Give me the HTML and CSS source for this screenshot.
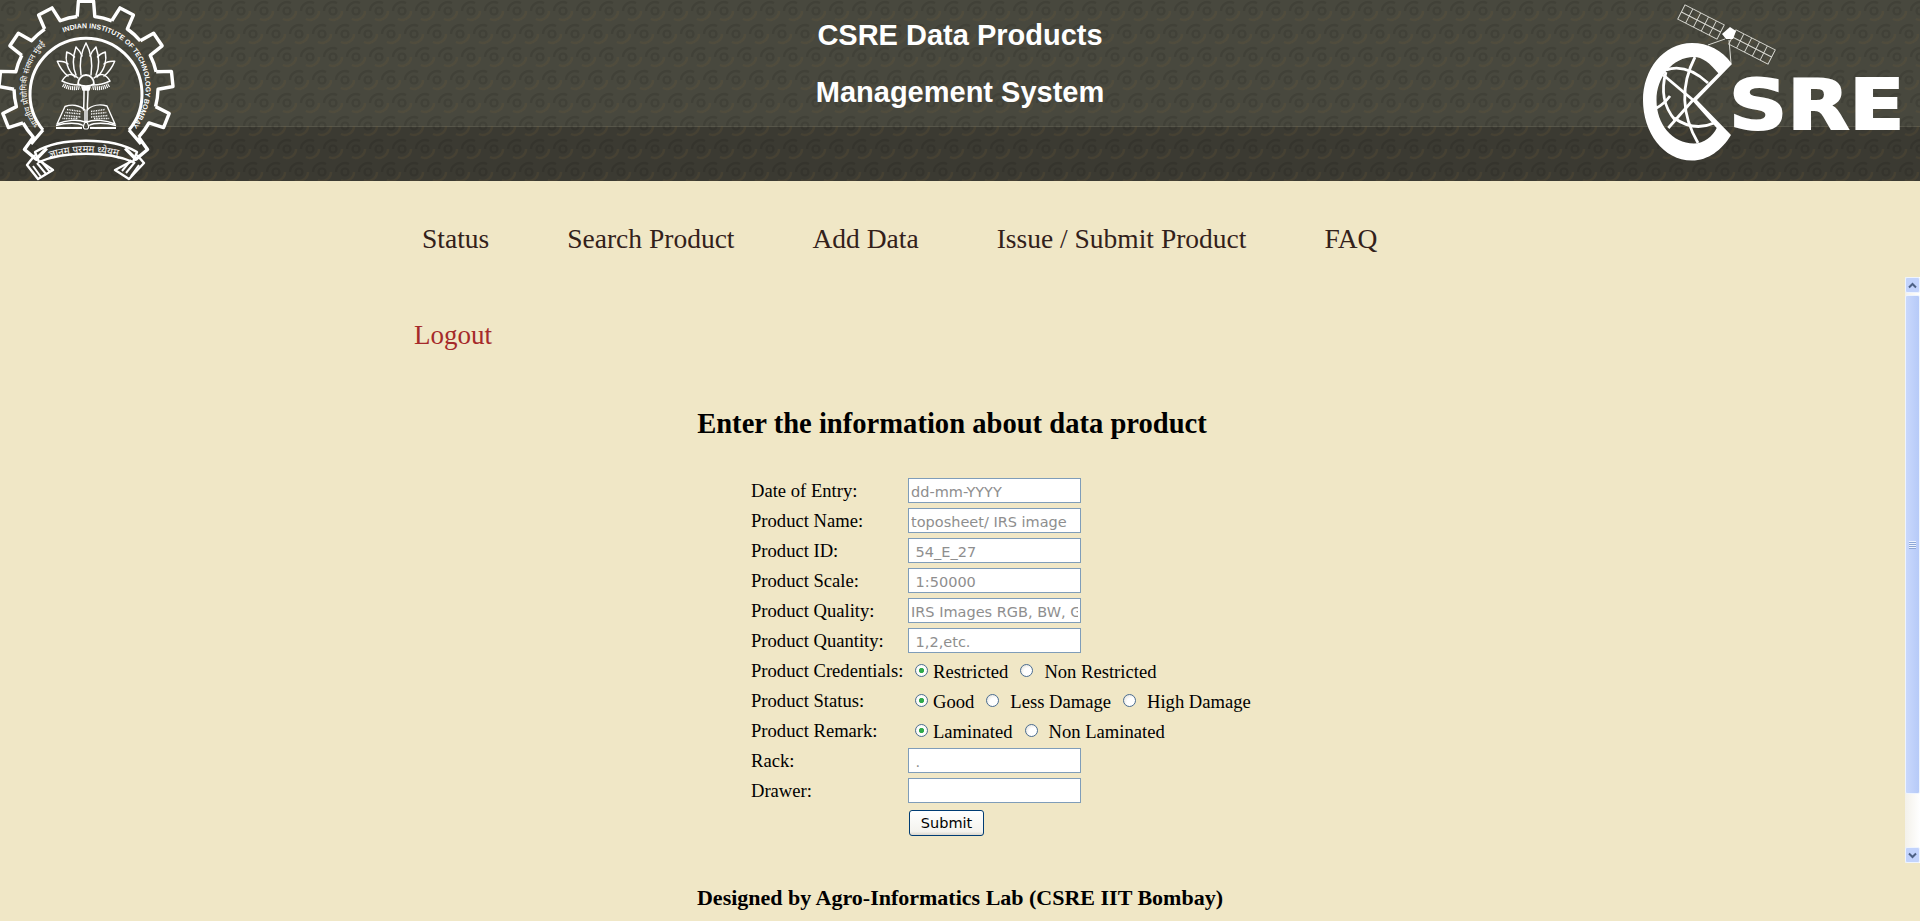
FILE: index.html
```html
<!DOCTYPE html>
<html lang="en">
<head>
<meta charset="utf-8">
<title>CSRE Data Products Management System</title>
<link rel="stylesheet" href="styles.css">
</head>
<body>
<header class="masthead">
  <svg class="masthead-bg" width="100%" height="100%" aria-hidden="true">
    <defs>
      <g id="swirl" fill="none">
        <circle cx="0" cy="0" r="3.5" stroke="#000" stroke-opacity=".1" stroke-width="2.2"/>
        <path d="M-9 0a9 9 0 0 1 13-8" stroke="#000" stroke-opacity=".1" stroke-width="2.4"/>
        <path d="M9 0a9 9 0 0 1-13 8" stroke="#7a6436" stroke-opacity=".16" stroke-width="2.4"/>
      </g>
      <pattern id="spiral" width="46" height="46" patternUnits="userSpaceOnUse">
        <use href="#swirl" x="11" y="11"/>
        <use href="#swirl" x="34" y="11"/>
        <use href="#swirl" x="0" y="34"/>
        <use href="#swirl" x="23" y="34"/>
        <use href="#swirl" x="46" y="34"/>
        <use href="#swirl" x="11" y="57"/>
        <use href="#swirl" x="34" y="57"/>
        <use href="#swirl" x="0" y="-12"/>
        <use href="#swirl" x="23" y="-12"/>
        <use href="#swirl" x="46" y="-12"/>
      </pattern>
    </defs>
    <rect width="100%" height="100%" fill="url(#spiral)"/>
  </svg>

  <svg class="logo-iit" width="175" height="181" viewBox="0 0 175 181" role="img" aria-label="IIT Bombay">
    <defs>
      <path id="tooth" d="M-8.8 -71.5L-7.6 -86.7L7.6 -86.7L8.8 -71.5A72 72 0 0 1 25.8 -67.2"/>
      <path id="arcEn" d="M63.5 32.4A60 60 0 0 1 133 125"/>
      <path id="arcHi" d="M39 125A60 60 0 0 1 59 35"/>
      <path id="ribbonArc" d="M50 158Q86 147 124 158"/>
    </defs>
    <g transform="translate(86 88)" fill="none" stroke="#fff" stroke-width="3.4" stroke-linejoin="round">
      <use href="#tooth" transform="rotate(-140)"/>
      <use href="#tooth" transform="rotate(-112)"/>
      <use href="#tooth" transform="rotate(-84)"/>
      <use href="#tooth" transform="rotate(-56)"/>
      <use href="#tooth" transform="rotate(-28)"/>
      <use href="#tooth"/>
      <use href="#tooth" transform="rotate(28)"/>
      <use href="#tooth" transform="rotate(56)"/>
      <use href="#tooth" transform="rotate(84)"/>
      <use href="#tooth" transform="rotate(112)"/>
      <path d="M-8.8 -71.5L-7.6 -86.7L7.6 -86.7L8.8 -71.5" transform="rotate(140)"/>
      <path d="M-43 42A56 56 0 1 1 43 42" stroke-width="3"/>
      <path d="M-55 56L-43 42M55 56L43 42"/>
    </g>
    <text class="seal-text"><textPath href="#arcEn">INDIAN INSTITUTE OF TECHNOLOGY BOMBAY</textPath></text>
    <text class="seal-text seal-hi"><textPath href="#arcHi">भारतीय प्रौद्योगिकी संस्थान मुंबई</textPath></text>

    <g fill="none" stroke="#fff" stroke-width="1.5" stroke-linejoin="round" stroke-linecap="round">
      <path d="M86 43C81 52 79 62 81 75M86 43C91 52 93 62 91 75"/>
      <path d="M76 47C73 56 72 66 76 75M76 47C79 50 81 53 82 56M96 47C99 56 100 66 96 75M96 47C93 50 91 53 90 56"/>
      <path d="M66.7 52C65 60 67 70 75 77M66.7 52C70 53 73 55 74.5 57M105.3 52C107 60 105 70 97 77M105.3 52C102 53 99 55 97.500 57"/>
      <path d="M57.300 61.300C60 68 64 73 68 76M57.300 61.300C62 61 66 62 68 64M114.700 61.300C112 68 108 73 104 76M114.700 61.300C110 61 106 62 104 64"/>
      <path d="M78 78C72 72 66 74 62 81C68 84 74 85 79 85M94 78C100 72 106 74 110 81C104 84 98 85 93 85"/>
      <path d="M78 84A8 9 0 0 1 94 84C90 87 82 87 78 84Z" stroke-width="1.8"/>
      <path d="M82 87H90L89 90H83Z" fill="#fff"/>
      <path d="M84 90C84 100 84 105 83.500 110M88 90C88 100 87 105 87.500 110"/>
    </g>
    <path d="M63 85C68 88 74 89 80 87.500M109 85C104 88 98 89 92 87.500" fill="none" stroke="#fff" stroke-width="4" stroke-dasharray="1.100 .8"/>
    <g fill="none" stroke="#fff" stroke-width="1.4" stroke-linejoin="round">
      <path d="M65 106.500C72 104 80 105 85 110V122C78 119 66 120 57 124Z"/>
      <path d="M107 106C100 104 92 105 87 110V122C94 119 106 120 115 124Z"/>
      <path d="M67 109.500L81 111.500M65.500 112.500L81 114M64 115.500L81 117M62.500 118.500L78 118.500M91 111.500L105 109.500M91 114L106.500 112.500M91 117L108 115.500M94 118.500L109.500 118.500" stroke-width="1.500" stroke-dasharray="1 .7"/>
      <path d="M56 125.500C66 122.500 78 122.500 83 125.500M116 125.500C106 122.500 94 122.500 89 125.500"/>
      <path d="M56 128H82M116 128H90" stroke-width="1.800"/>
      <path d="M86 121C83 125 82 129 86 129C90 129 89 125 86 121Z" stroke-width="1.200"/>
    </g>

    <g fill="none" stroke="#fff" stroke-width="2.4" stroke-linejoin="round">
      <path d="M35 152C60 137 112 137 137 152L133 162C108 151 64 151 39 162Z"/>
      <path d="M35 155L27 165L38 179L53 170L40 161M137 155L144 163L129 179L115 170L132 161"/>
    </g>
    <path d="M33 166L41 177M37 163L46 174M41 161L50 172M139 165L131 176M135 162L126 173M131 160L122 171" fill="none" stroke="#fff" stroke-width="2"/>
    <text class="seal-ribbon"><textPath href="#ribbonArc">ज्ञानम् परमम् ध्येयम्</textPath></text>
  </svg>

  <div class="masthead-title">
    <h1>CSRE Data Products</h1>
    <h1>Management System</h1>
  </div>

  <svg class="logo-csre" width="300" height="181" viewBox="0 0 300 181" role="img" aria-label="CSRE">
    <defs>
      <g id="panel" fill="none" stroke="#d9d9d2" stroke-width="1">
        <path d="M-22 -8h44v16h-44zM-22 0h44M-13.2 -8v16M-4.4 -8v16M4.4 -8v16M13.2 -8v16"/>
      </g>
    </defs>
    <use href="#panel" transform="translate(81 22) rotate(27)"/>
    <use href="#panel" transform="translate(132 47) rotate(27)"/>
    <path d="M102 34L110 27L116 31L113 39L106 39Z" fill="#fff"/>
    <path d="M105 39L88 45M109 40L111 63" stroke="#d9d9d2" fill="none"/>
    <path fill="#fff" fill-rule="evenodd" d="M112 64C102 50 88 43 72 43C43 43 23 70 23 100C23 132 43 160.500 72 160.500C88 160.500 102 150 111 135L77 100ZM98.300 73.300C90 63 82 57 74 57C52 57 36.500 78 36.500 100C36.500 124 52 143.500 74 143.500C84 143.500 93 136 96.700 128L71.700 100Z"/>
    <g fill="none" stroke="#fff" stroke-width="2.800">
      <path d="M73 100L43.300 75"/>
      <path d="M73 100L48.300 128"/>
      <path d="M46 70Q66 63 88 83"/>
      <path d="M54 118Q74 132 94 123"/>
      <path d="M75 57Q53 100 78 143"/>
      <path d="M36.500 108Q44 104 50 96"/>
      <path d="M46 72Q38 100 55 120"/>
    </g>
    <text class="csre-mark" transform="translate(109 129) scale(1.17 1)">SRE</text>
  </svg>
</header>

<main class="content">
  <nav class="main-nav">
    <a href="#">Status</a>
    <a href="#">Search Product</a>
    <a href="#">Add Data</a>
    <a href="#">Issue / Submit Product</a>
    <a href="#">FAQ</a>
  </nav>
  <a class="logout" href="#">Logout</a>

  <h2 class="form-title">Enter the information about data product</h2>

  <form class="entry-form">
    <label class="lbl">Date of Entry:</label>
    <input class="field" type="text" placeholder="dd-mm-YYYY">
    <label class="lbl">Product Name:</label>
    <input class="field" type="text" placeholder="toposheet/ IRS image">
    <label class="lbl">Product ID:</label>
    <input class="field" type="text" placeholder=" 54_E_27">
    <label class="lbl">Product Scale:</label>
    <input class="field" type="text" placeholder=" 1:50000">
    <label class="lbl">Product Quality:</label>
    <input class="field" type="text" placeholder="IRS Images RGB, BW, GIS">
    <label class="lbl">Product Quantity:</label>
    <input class="field" type="text" placeholder=" 1,2,etc.">

    <label class="lbl">Product Credentials:</label>
    <div class="radios">
      <input class="radio" type="radio" name="cred" checked><span class="opt">Restricted</span>
      <input class="radio" type="radio" name="cred"><span class="opt">Non Restricted</span>
    </div>
    <label class="lbl">Product Status:</label>
    <div class="radios">
      <input class="radio" type="radio" name="status" checked><span class="opt">Good</span>
      <input class="radio" type="radio" name="status"><span class="opt">Less Damage</span>
      <input class="radio" type="radio" name="status"><span class="opt">High Damage</span>
    </div>
    <label class="lbl">Product Remark:</label>
    <div class="radios">
      <input class="radio" type="radio" name="remark" checked><span class="opt">Laminated</span>
      <input class="radio" type="radio" name="remark"><span class="opt">Non Laminated</span>
    </div>

    <label class="lbl">Rack:</label>
    <input class="field" type="text" placeholder=" .">
    <label class="lbl">Drawer:</label>
    <input class="field" type="text">
    <span></span>
    <button class="submit" type="button">Submit</button>
  </form>

  <h3 class="credit">Designed by Agro-Informatics Lab (CSRE IIT Bombay)</h3>

  <div class="scrollbar" aria-hidden="true">
    <div class="sb-btn"><svg width="9" height="7" viewBox="0 0 9 7"><path d="M1 5.500L4.500 2L8 5.500" fill="none" stroke="#4d6185" stroke-width="2"/></svg></div>
    <div class="sb-thumb"><span class="sb-grip"></span></div>
    <div class="sb-track"></div>
    <div class="sb-btn"><svg width="9" height="7" viewBox="0 0 9 7"><path d="M1 1.500L4.500 5L8 1.500" fill="none" stroke="#4d6185" stroke-width="2"/></svg></div>
  </div>
</main>
</body>
</html>
```

FILE: styles.css
```css
html, body {
  margin: 0;
  height: 100%;
  overflow: hidden;
}
body {
  background: #f0e7c6;
  font-family: "Liberation Serif", "Times New Roman", serif;
  color: #000;
}

/* masthead */
.masthead {
  position: relative;
  height: 181px;
  display: flex;
  justify-content: space-between;
  background: linear-gradient(#48483e 0, #48483e 126px, #57564a 126px, #57564a 127px, #3b3a32 127px, #3b3a32 100%);
  overflow: hidden;
}
.masthead-bg {
  position: absolute;
  inset: 0;
}
.logo-iit, .logo-csre {
  position: relative;
  flex: none;
  display: block;
}
.masthead-title {
  position: absolute;
  left: 0;
  right: 0;
  top: 20px;
  text-align: center;
  color: #fff;
  font-family: "Liberation Sans", Arial, sans-serif;
}
.masthead-title h1 {
  margin: 0 0 27px;
  font-size: 29px;
  line-height: 30px;
  font-weight: 700;
}
.seal-text {
  font-family: "Liberation Sans", Arial, sans-serif;
  font-size: 7px;
  font-weight: 700;
  fill: #fff;
}
.seal-hi {
  font-family: "Noto Sans", "Liberation Sans", sans-serif;
  font-size: 7.8px;
  font-weight: 400;
}
.seal-ribbon {
  font-family: "Noto Sans", "Liberation Sans", sans-serif;
  font-size: 10px;
  fill: #fff;
}
.csre-mark {
  font-family: "DejaVu Sans", sans-serif;
  font-size: 69px;
  font-weight: 700;
  fill: #fff;
  stroke: #fff;
  stroke-width: 2px;
}

/* content */
.content {
  position: relative;
  height: 740px;
  overflow: hidden;
}
.main-nav {
  display: flex;
  gap: 78px;
  padding: 42px 0 0 422px;
  font-size: 27.5px;
  line-height: 32px;
}
.main-nav a { color: #33211a; text-decoration: none; }
.logout {
  display: block;
  width: max-content;
  margin: 64px 0 0 414px;
  font-size: 27px;
  line-height: 32px;
  color: #a52a2a;
  text-decoration: none;
}
.form-title {
  margin: 57px 0 0;
  padding-right: 16px;
  text-align: center;
  font-size: 28.6px;
  line-height: 32px;
  font-weight: 700;
}
.entry-form {
  display: grid;
  grid-template-columns: 157px 173px;
  grid-auto-rows: 25px;
  row-gap: 5px;
  margin: 38px 0 0 751px;
  font-size: 18.6px;
  align-items: center;
}
.lbl { white-space: nowrap; }
.field {
  box-sizing: border-box;
  width: 173px;
  height: 25px;
  margin: 0;
  padding: 2px 2px 0;
  background: #fff;
  border: 1px solid #7f9db9;
  border-radius: 0;
  font-family: "DejaVu Sans", Verdana, sans-serif;
  font-size: 14.5px;
  outline: none;
}
.field::placeholder { color: #8e8e8e; opacity: 1; }
.radios {
  display: flex;
  align-items: center;
  white-space: nowrap;
  padding-left: 7px;
}
.radio {
  appearance: none;
  box-sizing: border-box;
  width: 13px;
  height: 13px;
  margin: -1px 5px 0 0;
  flex: none;
  border: 1px solid #4a6d92;
  border-radius: 50%;
  background: radial-gradient(circle at 65% 65%, #fff 40%, #dcd9cf 100%);
}
.radio:checked {
  background: radial-gradient(circle, #2fa84a 0, #2fa84a 2.2px, #fff 3px, #f3f1ea 100%);
}
.opt { margin: 2px 12px 0 0; }
.radio:not(:checked) + .opt { margin-left: 6px; }
.submit {
  box-sizing: border-box;
  justify-self: start;
  width: 75px;
  height: 26px;
  margin: 5px 0 0 1px;
  padding: 0;
  border: 1px solid #003c74;
  border-radius: 3px;
  background: linear-gradient(#fff, #f4f3ee 85%, #dcd8ce);
  font-family: "DejaVu Sans", Verdana, sans-serif;
  font-size: 14.5px;
  color: #000;
}
.credit {
  margin: 52px 0 0;
  text-align: center;
  font-size: 22px;
  line-height: 26px;
  font-weight: 700;
}

/* the framed panel's own scrollbar */
.scrollbar {
  position: absolute;
  top: 96px;
  right: 0;
  width: 15px;
  height: 586px;
  display: flex;
  flex-direction: column;
  background: linear-gradient(90deg, #f3f1ea, #fff);
}
.sb-btn {
  flex: none;
  height: 16px;
  display: flex;
  align-items: center;
  justify-content: center;
  box-sizing: border-box;
  border: 1px solid #eef4fe;
  border-radius: 2px;
  background: #c2d3fc;
}
.sb-thumb {
  flex: none;
  height: 499px;
  margin-top: 2px;
  box-sizing: border-box;
  display: flex;
  align-items: center;
  justify-content: center;
  border: 1px solid #eef4fe;
  border-radius: 2px;
  background: linear-gradient(90deg, #c9d8fc, #b6caf8);
}
.sb-grip {
  width: 7px;
  height: 8px;
  background: repeating-linear-gradient(#eef4fe 0 1px, #8da7d6 1px 2px);
}
.sb-track { flex: 1; }
```
